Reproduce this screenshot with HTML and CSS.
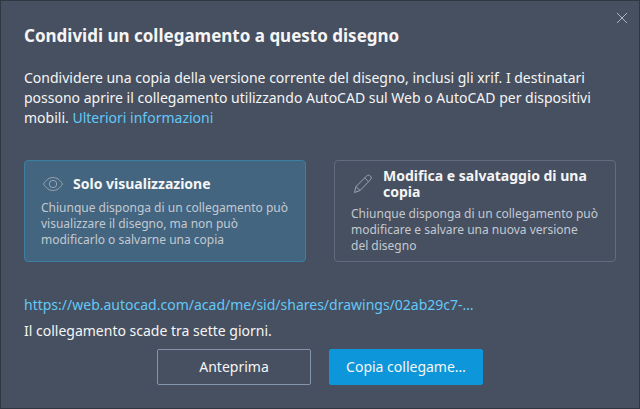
FILE: index.html
```
<!DOCTYPE html>
<html lang="it">
<head>
  <meta charset="UTF-8">
  <meta name="viewport" content="width=device-width, initial-scale=1.0">
  <title>Condividi un collegamento a questo disegno</title>
  <link rel="stylesheet" href="styles.css">
</head>
<body>

  <main class="dialog">

    <button class="close" type="button" aria-label="Chiudi">
      <svg width="12" height="12" viewBox="0 0 12 12"><path d="M1 1l10 10M11 1L1 11"/></svg>
    </button>

    <h1>Condividi un collegamento a questo disegno</h1>

    <p class="intro">Condividere una copia della versione corrente del disegno, inclusi gli xrif. I destinatari possono aprire il collegamento utilizzando AutoCAD sul Web o AutoCAD per dispositivi mobili. <a href="#">Ulteriori informazioni</a></p>

    <form class="options">
      <input type="radio" name="access" id="view" checked>
      <label class="option" for="view">
        <span class="option-head">
          <svg class="icon" width="24" height="20" viewBox="0 0 24 20">
            <path d="M2.500 10C5 5.800 8.200 3.500 12 3.500s7 2.300 9.500 6.500c-2.500 4.200-5.700 6.500-9.500 6.500S5 14.200 2.500 10z"/>
            <circle cx="12" cy="10" r="3.700"/>
          </svg>
          <span class="option-title">Solo visualizzazione</span>
        </span>
        <span class="option-text">Chiunque disponga di un collegamento può visualizzare il disegno, ma non può modificarlo o salvarne una copia</span>
      </label>

      <input type="radio" name="access" id="edit">
      <label class="option" for="edit">
        <span class="option-head">
          <svg class="icon" width="24" height="20" viewBox="0 0 24 20">
            <path d="M3.500 18.500l1.500-6L15.600 2c1.100-1.100 2.700-1.100 3.800 0s1.100 2.700 0 3.800L9 16.500zM5 12.500l4 4M13.700 3.900l3.800 3.800"/>
          </svg>
          <span class="option-title">Modifica e salvataggio di una copia</span>
        </span>
        <span class="option-text">Chiunque disponga di un collegamento può modificare e salvare una nuova versione<br>del disegno</span>
      </label>
    </form>

    <a class="share-link" href="#">https://web.autocad.com/acad/me/sid/shares/drawings/02ab29c7-…</a>
    <p class="expiry">Il collegamento scade tra sette giorni.</p>

    <div class="actions">
      <button class="btn" type="button">Anteprima</button>
      <button class="btn btn-primary" type="button">Copia collegame…</button>
    </div>

  </main>

</body>
</html>
```
FILE: styles.css
```
*{
  box-sizing: border-box;
}

body{
  margin: 0;
  background-color: #475060;
  color: #f5f5f5;
  font-family: "Noto Sans", "Open Sans", sans-serif;
  font-size: 14px;
  line-height: 20px;
}

a{
  color: #62c8f8;
  text-decoration: none;
}

p{
  margin: 0;
}

.dialog{
  position: relative;
  min-height: 100vh;
  padding: 23px;
  border: 1px solid #2e3742;
}

.dialog h1{
  margin: 0 0 20px;
  font-size: 17px;
  line-height: 24px;
}

.close{
  position: absolute;
  top: 8px;
  right: 8px;
  width: 18px;
  height: 18px;
  padding: 3px;
  border: 0;
  background: none;
  cursor: pointer;
}

.close svg{
  display: block;
  fill: none;
  stroke: #aeb3bd;
}

.options{
  display: grid;
  grid-template-columns: 1fr 1fr;
  gap: 28px;
  margin: 32px 0 33px;
}

.options input{
  position: absolute;
  opacity: 0;
}

.option{
  display: flex;
  flex-direction: column;
  justify-content: center;
  gap: 6px;
  min-height: 102px;
  padding: 7px 16px;
  border: 1px solid #5f6d7e;
  border-radius: 4px;
  cursor: pointer;
}

.options input:checked + .option{
  background-color: #43657f;
  border-color: #3b7fa3;
}

.option-head{
  display: flex;
  align-items: center;
  gap: 8px;
}

.icon{
  flex: none;
  fill: none;
  stroke: #9aa5b4;
}

.option-title{
  font-weight: bold;
  line-height: 16px;
}

.option-text{
  color: #c3c9d1;
  font-size: 12px;
  line-height: 16px;
}

.share-link{
  display: block;
  overflow: hidden;
  white-space: nowrap;
  text-overflow: ellipsis;
}

.expiry{
  margin-top: 6px;
}

.actions{
  display: flex;
  justify-content: center;
  gap: 18px;
  margin-top: 8px;
}

.btn{
  width: 154px;
  height: 36px;
  padding: 0 8px;
  border: 1px solid #8594ad;
  border-radius: 2px;
  background: none;
  color: #f5f5f5;
  font: inherit;
  cursor: pointer;
}

.btn-primary{
  background-color: #0d96d9;
  border-color: #0d96d9;
}
```
